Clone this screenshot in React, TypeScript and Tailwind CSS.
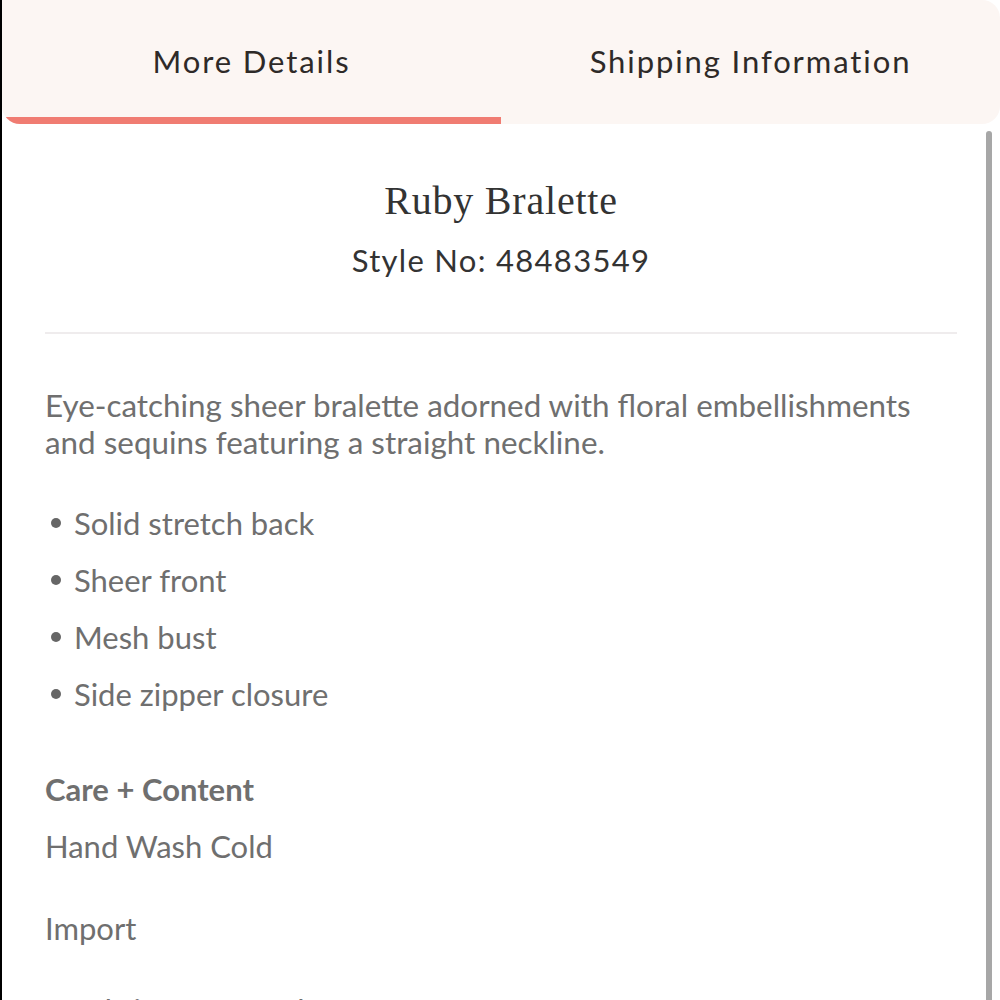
export default function App() {
  const bullets = ['Solid stretch back', 'Sheer front', 'Mesh bust', 'Side zipper closure'];

  return (
    <div className="relative h-[1000px] w-full overflow-hidden border-l-2 border-black bg-white font-['Lato',sans-serif]">
      {/* tab bar */}
      <div className="flex h-[124px] overflow-hidden rounded-tr-[18px] rounded-b-[18px] bg-[#fcf6f3]">
        <div className="flex flex-1 flex-col">
          <div className="flex flex-1 items-center justify-center pt-[6px] text-[31px] tracking-[1.9px] text-[#2e2a28]">
            More Details
          </div>
          <div className="h-[7px] bg-[#f07c72]" />
        </div>
        <div className="flex flex-1 items-center justify-center pb-[7px] pt-[6px] text-[31px] tracking-[1.9px] text-[#2e2a28]">
          Shipping Information
        </div>
      </div>

      {/* scrollbar */}
      <div className="absolute right-[8px] top-[131px] h-[900px] w-[6px] rounded-full bg-[#a7a7a7]" />

      <div className="px-[43px]">
        <div className="flex flex-col items-center pt-[53px]">
          <h1 className="font-['Liberation_Serif',serif] text-[40px] leading-[48px] tracking-[0.8px] text-[#333]">
            Ruby Bralette
          </h1>
          <p className="mt-[18px] text-[31px] leading-[34px] tracking-[1.3px] text-[#333]">Style No: 48483549</p>
        </div>

        <div className="mt-[55px] h-[2px] bg-[#efeced]" />

        <p className="mt-[53px] text-[31.4px] leading-[37px] text-[#6f6f6f]">
          Eye-catching sheer bralette adorned with floral embellishments and sequins featuring a straight neckline.
        </p>

        <ul className="mt-[45px] flex flex-col gap-[23px] text-[31px] leading-[34px] text-[#6f6f6f]">
          {bullets.map((b) => (
            <li key={b} className="flex items-center">
              <span className="ml-[6px] mr-[13px] h-[10px] w-[10px] rounded-full bg-[#666]" />
              {b}
            </li>
          ))}
        </ul>

        <h2 className="mt-[61px] text-[31px] font-bold leading-[34px] text-[#6f6f6f]">Care + Content</h2>
        <p className="mt-[23px] text-[31px] leading-[34px] text-[#6f6f6f]">Hand Wash Cold</p>
        <p className="mt-[48px] text-[31px] leading-[34px] text-[#6f6f6f]">Import</p>
        <p className="mt-[48px] flex items-center text-[31px] leading-[34px] text-[#6f6f6f]">
          <span className="ml-[6px] mr-[13px] h-[10px] w-[10px] rounded-full bg-[#666]" />
          Fabric: 100% Nylon
        </p>
      </div>
    </div>
  );
}
